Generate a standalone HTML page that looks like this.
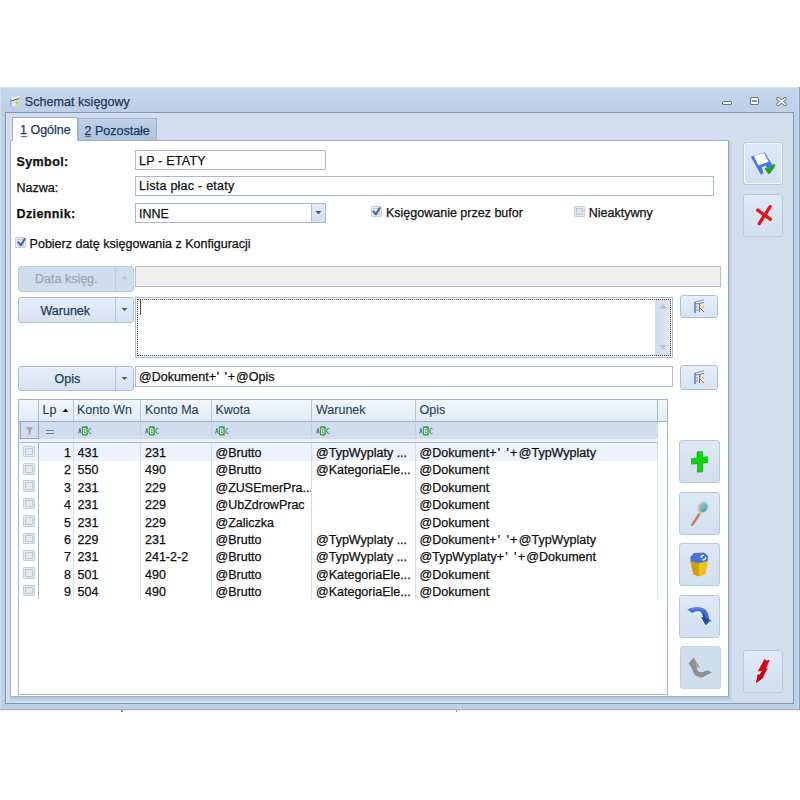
<!DOCTYPE html>
<html><head><meta charset="utf-8">
<style>
*{box-sizing:border-box;margin:0;padding:0}
html,body{width:800px;height:800px;background:#fff;overflow:hidden;position:relative;font-family:"Liberation Sans",sans-serif;font-size:12.5px;color:#101010}
.t{-webkit-text-stroke:0.25px currentColor}
.a{position:absolute}
.t{position:absolute;line-height:14px;white-space:nowrap;font-size:12.5px}
.b{font-weight:bold}
#win{left:0;top:87px;width:800px;height:623px;background:linear-gradient(#c6d7ec,#bccfe7 25px,#bed0e8 26px,#bdd0e8);border-bottom:1px solid #9fb0c4}
#win:before{content:"";position:absolute;left:0;top:0;width:1px;height:100%;background:#d0e0f2}
#win:after{content:"";position:absolute;left:0;top:0;width:100%;height:1px;background:#d3e2f3}
#frame{left:5px;top:112px;width:789px;height:592px;border:1px solid #8198b8;background:#d2deed}
#page{left:10px;top:140px;width:719px;height:557px;border:1px solid #9fb3cf;border-right-color:#8ea5c3;background:#fff}
.tab{position:absolute;border:1px solid #9fb3cf;border-bottom:none}
.inp{position:absolute;border:1px solid #a9b9d1;background:#fff}
.btn{position:absolute;border:1px solid #aebfd8;border-radius:3px;background:linear-gradient(#e6eef9,#d6e2f1)}
.cb{position:absolute;width:11px;height:11px;border:1px solid #bccfe6;border-radius:1px;box-shadow:inset 0 0 0 1px #e6ebf1,inset 0 0 0 2px #c3c7cd;background:#e7e8eb}
.gl{position:absolute;background:#d3dff0}
.abc{height:9px;font-size:6px;line-height:9px;font-family:"Liberation Sans",sans-serif;font-weight:bold;display:flex;gap:0}
.abc i{font-style:normal;color:#4c73b8;width:3.5px;text-align:center}
.abc b{background:#3cb043;color:#fff;width:6px;text-align:center;border-radius:1px}
.cb.g{width:11.5px;height:11.5px}
.btn.big{border-color:#b8c8dd;background:linear-gradient(#dfe9f6,#d2dfef)}
.btn.dflat{background:#cfdeed;border-color:#c3d3e6}
.btn.dis{background:#d0ddee;border-color:#bccce0}
.t.b{letter-spacing:0.4px}
.ap{letter-spacing:1.35px}
</style></head><body>
<div id="win" class="a"></div>
<div class="a" style="left:798px;top:87px;width:1px;height:622px;background:#d0e0f3"></div>
<div class="a" style="left:799px;top:87px;width:1px;height:623px;background:#8e9aa8"></div>
<!-- title icon -->
<svg class="a" style="left:0px;top:82px" width="20" height="28" viewBox="0 0 20 28">
<path d="M10 16.2 L19 13.2 L19 23.2 L10.6 25.6Z" fill="#8ca8e8"/>
<path d="M11.2 16 L19.2 13.6 L19.2 16 L11.4 18.6Z" fill="#ffffff"/>
<path d="M11.4 18.6 L19.2 16 L19.2 17 L11.4 19.6Z" fill="#606060"/>
<path d="M11.6 19.6 L19 17.2 L19 23 L11.6 25.2Z" fill="#dfe6ef"/>
<circle cx="17.2" cy="20.8" r="2.7" fill="#e5df88"/><circle cx="17.2" cy="20.8" r="1" fill="#a7b07a"/>
</svg>
<div class="t" style="left:24.8px;top:94.9px;color:#1e3a5c;font-size:12.6px">Schemat księgowy</div>
<!-- window buttons -->
<div class="a" style="left:722px;top:100.5px;width:10px;height:4.5px;border:1px solid #6a7684;border-radius:1px;background:#fff"></div>
<div class="a" style="left:750px;top:97px;width:9px;height:8px;border:1px solid #6a7684;border-radius:1px;background:#fff"></div>
<div class="a" style="left:752px;top:99.5px;width:5px;height:2px;background:#8a96a4"></div>
<svg class="a" style="left:776px;top:97px" width="11" height="9" viewBox="0 0 11 9"><path d="M2 1.6 L9 7.4 M9 1.6 L2 7.4" stroke="#6d7886" stroke-width="3.6" stroke-linecap="round"/><path d="M2 1.6 L9 7.4 M9 1.6 L2 7.4" stroke="#fff" stroke-width="1.7" stroke-linecap="round"/></svg>

<div class="a" style="left:0;top:710px;width:800px;height:1px;background:#e8edf4"></div>
<div class="a" style="left:121px;top:710px;width:2px;height:2px;background:#7d96b8"></div>
<div class="a" style="left:456px;top:710px;width:1px;height:2px;background:#7d96b8"></div>
<div id="frame" class="a"></div>
<div id="page" class="a"></div>
<div class="a" style="left:729px;top:141px;width:3px;height:557px;background:linear-gradient(90deg,#bccadb,#cfdcec)"></div>
<div class="a" style="left:10px;top:697px;width:722px;height:5px;background:linear-gradient(#b3c3d8,#d0ddec)"></div>
<!-- tabs -->
<div class="tab" style="left:77.5px;top:118px;width:79.5px;height:22px;background:linear-gradient(#bdd0e7,#afc4df)"></div>
<div class="tab" style="left:12px;top:117px;width:66px;height:24px;background:#fff"></div>
<div class="t" style="left:20px;top:122.5px;color:#1e395b">1 Ogólne</div>
<div class="a" style="left:20.5px;top:135.5px;width:6px;height:1px;background:#5a6f8c"></div>
<div class="t" style="left:84.5px;top:123.5px;color:#1e395b">2 Pozostałe</div>
<div class="a" style="left:85px;top:136px;width:6px;height:1px;background:#5a6f8c"></div>

<!-- labels -->
<div class="t b" style="left:16.5px;top:154.5px">Symbol:</div>
<div class="t" style="left:16.5px;top:180.5px">Nazwa:</div>
<div class="t b" style="left:16.5px;top:207.2px">Dziennik:</div>
<div class="inp" style="left:135px;top:150px;width:191px;height:20px"></div>
<div class="t" style="left:139px;top:153.5px;letter-spacing:0.22px">LP - ETATY</div>
<div class="inp" style="left:135px;top:176px;width:579px;height:20px"></div>
<div class="t" style="left:139px;top:179px;letter-spacing:0.25px">Lista płac - etaty</div>
<div class="inp" style="left:135px;top:203px;width:191px;height:20px"></div>
<div class="a" style="left:311px;top:203px;width:15px;height:20px;border:1px solid #a9b9d1;background:linear-gradient(#e2ebf7,#d3dff0)"></div>
<svg class="a" style="left:315px;top:210px" width="8" height="5"><path d="M0.5 1 L6.5 1 L3.5 4.5Z" fill="#4a5a78"/></svg>
<div class="t" style="left:139px;top:206.5px">INNE</div>

<div class="cb" style="left:370.9px;top:205.8px"></div>
<div class="t" style="left:386px;top:206px">Księgowanie przez bufor</div>
<div class="cb" style="left:574px;top:206px"></div>
<div class="t" style="left:588.8px;top:206px">Nieaktywny</div>
<div class="cb" style="left:15.4px;top:236.6px"></div>
<div class="t" style="left:29.6px;top:236.5px">Pobierz datę księgowania z Konfiguracji</div>

<!-- checkmarks -->
<svg class="a" style="left:372px;top:207px" width="10" height="10" viewBox="0 0 10 10"><path d="M1.4 4.4 L3.9 7.1 L7.6 1.2" stroke="#45659a" stroke-width="2" fill="none" stroke-linecap="round"/></svg>
<svg class="a" style="left:16.5px;top:238.2px" width="10" height="10" viewBox="0 0 10 10"><path d="M1.4 4.4 L3.9 7.1 L7.6 1.2" stroke="#45659a" stroke-width="2" fill="none" stroke-linecap="round"/></svg>

<!-- Data ksieg -->
<div class="btn dis" style="left:18px;top:266px;width:115.5px;height:25.5px"></div>
<div class="a" style="left:114.5px;top:267px;width:1px;height:23.5px;background:#bdcde1"></div>
<div class="t" style="left:35px;top:272px;color:#9ba6b6">Data księg.</div>
<svg class="a" style="left:120.5px;top:275.5px" width="8" height="5"><path d="M0.5 1 L6.5 1 L3.5 4Z" fill="#b6c2d2"/></svg>
<div class="inp" style="left:135px;top:266px;width:585.5px;height:20.5px;background:#efefef;border-color:#b3c1d6"></div>

<!-- Warunek -->
<div class="btn" style="left:18px;top:297px;width:115.5px;height:25.5px"></div>
<div class="a" style="left:114.5px;top:298px;width:1px;height:23.5px;background:#b4c5dc"></div>
<div class="t" style="left:40.5px;top:303.8px;color:#1e395b">Warunek</div>
<svg class="a" style="left:121px;top:307px" width="8" height="5"><path d="M0.5 1 L6.5 1 L3.5 4Z" fill="#4a5a78"/></svg>
<div class="inp" style="left:135px;top:297px;width:537.5px;height:61px"></div>
<div class="a" style="left:137px;top:299px;width:534px;height:57px;border:1px dotted #404040;z-index:2"></div>
<div class="a" style="left:655px;top:299px;width:16px;height:57px;background:linear-gradient(90deg,#d0dcec,#dde7f3)"></div>
<svg class="a" style="left:658px;top:303px" width="10" height="7"><path d="M1 6 L9 6 L5 1Z" fill="#b9c6d8"/></svg>
<svg class="a" style="left:658px;top:344px" width="10" height="7"><path d="M1 1 L9 1 L5 6Z" fill="#b9c6d8"/></svg>
<div class="a" style="left:140.3px;top:299.5px;width:1px;height:15px;background:#505050"></div>
<div class="btn" style="left:679.5px;top:294.5px;width:38px;height:23.5px"></div>

<!-- Opis -->
<div class="btn" style="left:18px;top:365.5px;width:115.5px;height:25.5px"></div>
<div class="a" style="left:114.5px;top:366.5px;width:1px;height:23.5px;background:#b4c5dc"></div>
<div class="t" style="left:54.5px;top:371.5px;color:#1e395b">Opis</div>
<svg class="a" style="left:121px;top:376px" width="8" height="5"><path d="M0.5 1 L6.5 1 L3.5 4Z" fill="#4a5a78"/></svg>
<div class="inp" style="left:135px;top:366px;width:537.5px;height:20.5px"></div>
<div class="t" style="left:139px;top:369.7px">@Dokument<span class="ap" style="letter-spacing:0.9px">+&#39; &#39;+</span>@Opis</div>
<div class="btn" style="left:679.5px;top:364.5px;width:38px;height:25.5px"></div>

<!-- grid -->
<div class="a" style="left:18px;top:399px;width:650px;height:296px;border:1px solid #a3b6cf;background:#fff"></div>
<div class="a" style="left:19px;top:400px;width:648px;height:22px;background:linear-gradient(#f2f6fb,#e2eaf5);border-bottom:1px solid #9fb2cc"></div>
<div class="a" style="left:19px;top:422px;width:638.5px;height:16.5px;background:#d1ddee"></div>
<div class="a" style="left:19px;top:438.5px;width:638.5px;height:3.5px;background:#eef3fa"></div>
<div class="a" style="left:19px;top:442px;width:638.5px;height:1px;background:#a9bad2"></div>
<div class="a" style="left:19px;top:443px;width:638.5px;height:17.6px;background:#edf2fc"></div>
<div class="a" style="left:20px;top:421px;width:18.7px;height:17.5px;border:1px solid #93a8c4"></div>

<div class="cb g" style="left:23.1px;top:445.70px"></div>
<div class="t" style="left:38px;width:33px;text-align:right;top:446.00px">1</div>
<div class="t" style="left:77.5px;top:446.00px;width:62px;overflow:hidden">431</div>
<div class="t" style="left:145px;top:446.00px;width:66px;overflow:hidden">231</div>
<div class="t" style="left:215.5px;top:446.00px;width:95px;overflow:hidden">@Brutto</div>
<div class="t" style="left:316px;top:446.00px;width:99px;overflow:hidden">@TypWyplaty ...</div>
<div class="t" style="left:419.5px;top:446.00px;width:237px;overflow:hidden">@Dokument<span class="ap">+&#39; &#39;+</span>@TypWyplaty</div>
<div class="cb g" style="left:23.1px;top:463.07px"></div>
<div class="t" style="left:38px;width:33px;text-align:right;top:463.38px">2</div>
<div class="t" style="left:77.5px;top:463.38px;width:62px;overflow:hidden">550</div>
<div class="t" style="left:145px;top:463.38px;width:66px;overflow:hidden">490</div>
<div class="t" style="left:215.5px;top:463.38px;width:95px;overflow:hidden">@Brutto</div>
<div class="t" style="left:316px;top:463.38px;width:99px;overflow:hidden">@KategoriaEle...</div>
<div class="t" style="left:419.5px;top:463.38px;width:237px;overflow:hidden">@Dokument</div>
<div class="cb g" style="left:23.1px;top:480.45px"></div>
<div class="t" style="left:38px;width:33px;text-align:right;top:480.75px">3</div>
<div class="t" style="left:77.5px;top:480.75px;width:62px;overflow:hidden">231</div>
<div class="t" style="left:145px;top:480.75px;width:66px;overflow:hidden">229</div>
<div class="t" style="left:215.5px;top:480.75px;width:95px;overflow:hidden">@ZUSEmerPra...</div>
<div class="t" style="left:419.5px;top:480.75px;width:237px;overflow:hidden">@Dokument</div>
<div class="cb g" style="left:23.1px;top:497.82px"></div>
<div class="t" style="left:38px;width:33px;text-align:right;top:498.13px">4</div>
<div class="t" style="left:77.5px;top:498.13px;width:62px;overflow:hidden">231</div>
<div class="t" style="left:145px;top:498.13px;width:66px;overflow:hidden">229</div>
<div class="t" style="left:215.5px;top:498.13px;width:95px;overflow:hidden">@UbZdrowPrac</div>
<div class="t" style="left:419.5px;top:498.13px;width:237px;overflow:hidden">@Dokument</div>
<div class="cb g" style="left:23.1px;top:515.20px"></div>
<div class="t" style="left:38px;width:33px;text-align:right;top:515.50px">5</div>
<div class="t" style="left:77.5px;top:515.50px;width:62px;overflow:hidden">231</div>
<div class="t" style="left:145px;top:515.50px;width:66px;overflow:hidden">229</div>
<div class="t" style="left:215.5px;top:515.50px;width:95px;overflow:hidden">@Zaliczka</div>
<div class="t" style="left:419.5px;top:515.50px;width:237px;overflow:hidden">@Dokument</div>
<div class="cb g" style="left:23.1px;top:532.58px"></div>
<div class="t" style="left:38px;width:33px;text-align:right;top:532.88px">6</div>
<div class="t" style="left:77.5px;top:532.88px;width:62px;overflow:hidden">229</div>
<div class="t" style="left:145px;top:532.88px;width:66px;overflow:hidden">231</div>
<div class="t" style="left:215.5px;top:532.88px;width:95px;overflow:hidden">@Brutto</div>
<div class="t" style="left:316px;top:532.88px;width:99px;overflow:hidden">@TypWyplaty ...</div>
<div class="t" style="left:419.5px;top:532.88px;width:237px;overflow:hidden">@Dokument<span class="ap">+&#39; &#39;+</span>@TypWyplaty</div>
<div class="cb g" style="left:23.1px;top:549.95px"></div>
<div class="t" style="left:38px;width:33px;text-align:right;top:550.25px">7</div>
<div class="t" style="left:77.5px;top:550.25px;width:62px;overflow:hidden">231</div>
<div class="t" style="left:145px;top:550.25px;width:66px;overflow:hidden">241-2-2</div>
<div class="t" style="left:215.5px;top:550.25px;width:95px;overflow:hidden">@Brutto</div>
<div class="t" style="left:316px;top:550.25px;width:99px;overflow:hidden">@TypWyplaty ...</div>
<div class="t" style="left:419.5px;top:550.25px;width:237px;overflow:hidden">@TypWyplaty<span class="ap">+&#39; &#39;+</span>@Dokument</div>
<div class="cb g" style="left:23.1px;top:567.33px"></div>
<div class="t" style="left:38px;width:33px;text-align:right;top:567.63px">8</div>
<div class="t" style="left:77.5px;top:567.63px;width:62px;overflow:hidden">501</div>
<div class="t" style="left:145px;top:567.63px;width:66px;overflow:hidden">490</div>
<div class="t" style="left:215.5px;top:567.63px;width:95px;overflow:hidden">@Brutto</div>
<div class="t" style="left:316px;top:567.63px;width:99px;overflow:hidden">@KategoriaEle...</div>
<div class="t" style="left:419.5px;top:567.63px;width:237px;overflow:hidden">@Dokument</div>
<div class="cb g" style="left:23.1px;top:584.70px"></div>
<div class="t" style="left:38px;width:33px;text-align:right;top:585.00px">9</div>
<div class="t" style="left:77.5px;top:585.00px;width:62px;overflow:hidden">504</div>
<div class="t" style="left:145px;top:585.00px;width:66px;overflow:hidden">490</div>
<div class="t" style="left:215.5px;top:585.00px;width:95px;overflow:hidden">@Brutto</div>
<div class="t" style="left:316px;top:585.00px;width:99px;overflow:hidden">@KategoriaEle...</div>
<div class="t" style="left:419.5px;top:585.00px;width:237px;overflow:hidden">@Dokument</div>
<!-- grid col lines header -->
<div class="a" style="left:38px;top:400px;width:1px;height:21px;background:#a9bbd3"></div>
<div class="a" style="left:73px;top:400px;width:1px;height:21px;background:#b6c6dc"></div>
<div class="a" style="left:140px;top:400px;width:1px;height:21px;background:#b6c6dc"></div>
<div class="a" style="left:211px;top:400px;width:1px;height:21px;background:#b6c6dc"></div>
<div class="a" style="left:311px;top:400px;width:1px;height:21px;background:#b6c6dc"></div>
<div class="a" style="left:415px;top:400px;width:1px;height:21px;background:#b6c6dc"></div>
<div class="a" style="left:657px;top:400px;width:1px;height:21px;background:#a3b5ce"></div>
<!-- filter row col lines -->
<div class="a" style="left:73px;top:422px;width:1px;height:16.5px;background:#c3d2e6"></div>
<div class="a" style="left:140px;top:422px;width:1px;height:16.5px;background:#c3d2e6"></div>
<div class="a" style="left:211px;top:422px;width:1px;height:16.5px;background:#c3d2e6"></div>
<div class="a" style="left:311px;top:422px;width:1px;height:16.5px;background:#c3d2e6"></div>
<div class="a" style="left:415px;top:422px;width:1px;height:16.5px;background:#c3d2e6"></div>
<!-- data col lines -->
<div class="a" style="left:38px;top:443px;width:1px;height:156px;background:#a3b6cf"></div>
<div class="gl" style="left:73px;top:443px;width:1px;height:156px"></div>
<div class="gl" style="left:140px;top:443px;width:1px;height:156px"></div>
<div class="gl" style="left:211px;top:443px;width:1px;height:156px"></div>
<div class="gl" style="left:311px;top:443px;width:1px;height:156px"></div>
<div class="gl" style="left:415px;top:443px;width:1px;height:156px"></div>
<div class="gl" style="left:657px;top:443px;width:1px;height:156px"></div>
<!-- header text -->
<div class="t" style="left:42.5px;top:403.2px;color:#243d5e;-webkit-text-stroke:0.1px #243d5e">Lp</div>
<svg class="a" style="left:62px;top:408px" width="8" height="5"><path d="M0.5 4 L6.5 4 L3.5 0.5Z" fill="#1b1b1b"/></svg>
<div class="t" style="left:77px;top:403.2px;color:#243d5e;-webkit-text-stroke:0.1px #243d5e">Konto Wn</div>
<div class="t" style="left:145px;top:403.2px;color:#243d5e;-webkit-text-stroke:0.1px #243d5e">Konto Ma</div>
<div class="t" style="left:215.5px;top:403.2px;color:#243d5e;-webkit-text-stroke:0.1px #243d5e">Kwota</div>
<div class="t" style="left:316px;top:403.2px;color:#243d5e;-webkit-text-stroke:0.1px #243d5e">Warunek</div>
<div class="t" style="left:419.5px;top:403.2px;color:#243d5e;-webkit-text-stroke:0.1px #243d5e">Opis</div>
<!-- filter icons -->
<div class="a" style="left:46px;top:430px;width:8px;height:1px;background:#5f80bd"></div>
<div class="a" style="left:46px;top:433px;width:8px;height:1px;background:#5f80bd"></div>
<svg class="a" style="left:25px;top:426px" width="9" height="10" viewBox="0 0 9 10"><path d="M1 1.5 Q4.5 0.6 8 1.5 L5.4 5 L6.8 6.4 L5 6.2 L4.6 9 L3.6 9 L3.8 5 Z" fill="#a6a49e"/></svg>
<svg class="a" style="left:77.7px;top:426px" width="15" height="10" viewBox="0 0 15 10"><path d="M0.6 7.6 L1.9 2.4 L3.2 7.6 M1.1 5.8 L2.7 5.8" stroke="#4d6fb2" stroke-width="1" fill="none"/><rect x="3.9" y="0.3" width="5.9" height="9.3" rx="1" fill="#35a83c"/><path d="M5.5 2.3 L5.5 7.7 M5.5 2.5 L7 2.5 Q8.1 2.5 8.1 3.7 Q8.1 4.9 7 4.9 L5.5 4.9 M7 4.9 Q8.3 4.9 8.3 6.3 Q8.3 7.5 7 7.5 L5.5 7.5" stroke="#eef8ee" stroke-width="0.9" fill="none"/><path d="M13.6 3 Q13 2.4 12.2 2.4 Q10.8 2.5 10.8 5 Q10.8 7.6 12.2 7.6 Q13 7.6 13.6 7" stroke="#4d6fb2" stroke-width="1" fill="none"/></svg>
<svg class="a" style="left:145.2px;top:426px" width="15" height="10" viewBox="0 0 15 10"><path d="M0.6 7.6 L1.9 2.4 L3.2 7.6 M1.1 5.8 L2.7 5.8" stroke="#4d6fb2" stroke-width="1" fill="none"/><rect x="3.9" y="0.3" width="5.9" height="9.3" rx="1" fill="#35a83c"/><path d="M5.5 2.3 L5.5 7.7 M5.5 2.5 L7 2.5 Q8.1 2.5 8.1 3.7 Q8.1 4.9 7 4.9 L5.5 4.9 M7 4.9 Q8.3 4.9 8.3 6.3 Q8.3 7.5 7 7.5 L5.5 7.5" stroke="#eef8ee" stroke-width="0.9" fill="none"/><path d="M13.6 3 Q13 2.4 12.2 2.4 Q10.8 2.5 10.8 5 Q10.8 7.6 12.2 7.6 Q13 7.6 13.6 7" stroke="#4d6fb2" stroke-width="1" fill="none"/></svg>
<svg class="a" style="left:215.2px;top:426px" width="15" height="10" viewBox="0 0 15 10"><path d="M0.6 7.6 L1.9 2.4 L3.2 7.6 M1.1 5.8 L2.7 5.8" stroke="#4d6fb2" stroke-width="1" fill="none"/><rect x="3.9" y="0.3" width="5.9" height="9.3" rx="1" fill="#35a83c"/><path d="M5.5 2.3 L5.5 7.7 M5.5 2.5 L7 2.5 Q8.1 2.5 8.1 3.7 Q8.1 4.9 7 4.9 L5.5 4.9 M7 4.9 Q8.3 4.9 8.3 6.3 Q8.3 7.5 7 7.5 L5.5 7.5" stroke="#eef8ee" stroke-width="0.9" fill="none"/><path d="M13.6 3 Q13 2.4 12.2 2.4 Q10.8 2.5 10.8 5 Q10.8 7.6 12.2 7.6 Q13 7.6 13.6 7" stroke="#4d6fb2" stroke-width="1" fill="none"/></svg>
<svg class="a" style="left:315.7px;top:426px" width="15" height="10" viewBox="0 0 15 10"><path d="M0.6 7.6 L1.9 2.4 L3.2 7.6 M1.1 5.8 L2.7 5.8" stroke="#4d6fb2" stroke-width="1" fill="none"/><rect x="3.9" y="0.3" width="5.9" height="9.3" rx="1" fill="#35a83c"/><path d="M5.5 2.3 L5.5 7.7 M5.5 2.5 L7 2.5 Q8.1 2.5 8.1 3.7 Q8.1 4.9 7 4.9 L5.5 4.9 M7 4.9 Q8.3 4.9 8.3 6.3 Q8.3 7.5 7 7.5 L5.5 7.5" stroke="#eef8ee" stroke-width="0.9" fill="none"/><path d="M13.6 3 Q13 2.4 12.2 2.4 Q10.8 2.5 10.8 5 Q10.8 7.6 12.2 7.6 Q13 7.6 13.6 7" stroke="#4d6fb2" stroke-width="1" fill="none"/></svg>
<svg class="a" style="left:419.2px;top:426px" width="15" height="10" viewBox="0 0 15 10"><path d="M0.6 7.6 L1.9 2.4 L3.2 7.6 M1.1 5.8 L2.7 5.8" stroke="#4d6fb2" stroke-width="1" fill="none"/><rect x="3.9" y="0.3" width="5.9" height="9.3" rx="1" fill="#35a83c"/><path d="M5.5 2.3 L5.5 7.7 M5.5 2.5 L7 2.5 Q8.1 2.5 8.1 3.7 Q8.1 4.9 7 4.9 L5.5 4.9 M7 4.9 Q8.3 4.9 8.3 6.3 Q8.3 7.5 7 7.5 L5.5 7.5" stroke="#eef8ee" stroke-width="0.9" fill="none"/><path d="M13.6 3 Q13 2.4 12.2 2.4 Q10.8 2.5 10.8 5 Q10.8 7.6 12.2 7.6 Q13 7.6 13.6 7" stroke="#4d6fb2" stroke-width="1" fill="none"/></svg>
<!-- right toolbar -->
<div class="btn big" style="left:742.5px;top:142.3px;width:40.6px;height:42.6px;box-shadow:inset 0 0 0 1px #f7fafd"></div>
<svg class="a" style="left:740px;top:140px" width="46" height="46" viewBox="0 0 46 46">
<path d="M10.9 16.7 L24.7 12.4 L34.5 28.2 L20.7 34.5Z" fill="#4a78da"/>
<path d="M13.8 15.9 L23.9 12.9 L28.7 21.8 L18.4 25.3Z" fill="#fff"/>
<path d="M21.8 27 L26 25.8 L28 31.6 L23.6 33.2Z" fill="#e4e9f0"/>
<path d="M26.2 28.9 L29 32.6 L33.9 25.4" stroke="#1aa81a" stroke-width="2.8" fill="none" stroke-linecap="round" stroke-linejoin="round"/>
</svg>
<div class="btn big" style="left:742.5px;top:194.3px;width:40.6px;height:43px"></div>
<svg class="a" style="left:742.5px;top:194.3px" width="41" height="43" viewBox="0 0 41 43">
<path d="M14.7 16.1 L27.4 25.3 M27.1 12.7 L16.2 29.6" stroke="#e8121c" stroke-width="3.3" stroke-linecap="round"/>
</svg>
<div class="btn big" style="left:742.5px;top:650.3px;width:40.6px;height:43px"></div>
<svg class="a" style="left:740px;top:648px" width="46" height="46" viewBox="0 0 46 46">
<path d="M24.4 11.2 L26.8 12.4 L29.9 12.1 L26 19.9 L27.5 20.6 L23.1 28.9 L23.7 29.3 L16.1 35.1 L17.9 26.3 L19.4 27.1 L22.4 23.1 L17.8 23.2Z" fill="#e20010"/>
<path d="M17.9 26.3 L19.4 27.1 L22.4 23.1 L23.1 28.9 L23.7 29.3 L16.1 35.1Z" fill="#c0000c"/>
</svg>
<!-- grid side buttons -->
<div class="btn big" style="left:679.3px;top:440.3px;width:40.6px;height:42.8px"></div>
<svg class="a" style="left:677px;top:438px" width="41" height="43" viewBox="0 0 41 43">
<path d="M19.8 13.8 L25.8 13.2 L25.8 19 L31 18.6 L31 24.8 L25.8 25.4 L25.8 34.2 L20.2 34.6 L20.2 26 L14.2 26.6 L14.2 20.4 L19.8 19.8Z" fill="#0a9a0a"/>
<path d="M20.6 13.4 L25.8 13 L25.8 19 L31 18.4 L31 24.2 L25.8 24.8 L25.8 33.6 L21 34 L21 25.4 L15 26 L15 20.2 L20.6 19.6Z" fill="#0fd60f"/>
</svg>
<div class="btn big" style="left:679.3px;top:492.3px;width:40.6px;height:42.8px"></div>
<svg class="a" style="left:677px;top:490px" width="46" height="46" viewBox="0 0 46 46">
<defs><linearGradient id="lg1" x1="0" y1="0" x2="1" y2="1"><stop offset="0" stop-color="#9ad6ea"/><stop offset="1" stop-color="#3d93bd"/></linearGradient></defs>
<path d="M22.2 24.4 L15.4 34.6" stroke="#b47a55" stroke-width="2.5" stroke-linecap="round"/>
<path d="M22.2 24.4 L15.4 34.6" stroke="#d9a47c" stroke-width="0.8" stroke-dasharray="1 1"/>
<ellipse cx="25.8" cy="17.4" rx="5.1" ry="6.2" transform="rotate(22 25.8 17.4)" fill="#dccb7a"/>
<ellipse cx="26.5" cy="17.1" rx="3.9" ry="5.1" transform="rotate(22 26.5 17.1)" fill="url(#lg1)"/>
</svg>
<div class="btn big" style="left:679.3px;top:543.3px;width:40.6px;height:42.8px"></div>
<svg class="a" style="left:677px;top:541px" width="41" height="43" viewBox="0 0 41 43">
<path d="M13.5 20.5 L31 20.5 L28.5 33.2 L21.8 35.6 L16.2 33.2Z" fill="#f2c20c"/>
<path d="M13.5 20.5 L21.8 22.5 L21.8 35.6 L16.2 33.2Z" fill="#c9a010"/>
<path d="M13.4 16 L17 12 L27 11.4 L31 15 L30.8 20 L22 22.2 L13.4 20.4Z" fill="#4a74d6"/>
<circle cx="26.4" cy="16.6" r="2.2" stroke="#fff" stroke-width="1.2" fill="none" stroke-dasharray="4 2"/>
</svg>
<div class="btn big" style="left:679.3px;top:595.3px;width:40.6px;height:42.8px"></div>
<svg class="a" style="left:677px;top:593px" width="46" height="46" viewBox="0 0 46 46">
<path d="M10.35 16.4 Q17 13.6 23 14.6 Q30.5 16 31.6 23 L32.2 26.2 L34.5 27.6 L28.75 31.9 L24.15 24.15 L26.2 24.7 Q25.8 20.5 22.4 18.1 Q18.5 17.6 15.2 20.1 Z" fill="#3f6cd4"/>
<path d="M24.6 18.6 Q27.6 20.4 28.6 24.6 L32.2 26.2 L28.75 31.9 L24.15 24.15 L26.2 24.7 Q25.8 20.5 24.6 18.6Z" fill="#2448a0"/>
<path d="M10.35 16.4 Q17 13.6 23 14.6 Q27 15.4 29.4 17.6 Q24 15.8 18 16.2 Q13 16.8 10.35 16.4Z" fill="#5a86e8"/>
</svg>
<div class="btn big dflat" style="left:679.9px;top:646.3px;width:40.8px;height:43.1px"></div>
<svg class="a" style="left:677px;top:644px" width="41" height="43" viewBox="0 0 41 43">
<path d="M16.7 13.4 L22.9 23.4 L19.6 23.2 Q20 28.5 25 28.2 L31 26.2 L35 28.6 L25 33.4 Q16.2 33.2 15 24.4 L11.6 19.6Z" fill="#8f8f8f"/>
<path d="M16.7 13.4 L22.9 23.4 L19.6 23.2 Z" fill="#a8a8a8"/>
</svg>
<!-- small buttons with icon -->
<svg class="a" style="left:694px;top:299px" width="12" height="15" viewBox="0 0 12 15"><path d="M1 3 L10 0.5 L10 13 L1 14Z" fill="#e7ebf0"/><path d="M1 3 L1 14" stroke="#3f5fd8" stroke-width="1.3"/><path d="M1 3 L10 0.8" stroke="#5a78d8" stroke-width="0.8"/><path d="M2 5 L10 3.5" stroke="#7a7a7a" stroke-width="1.2"/><circle cx="6" cy="6" r="1" fill="#f2a93a"/><circle cx="9" cy="8" r="1" fill="#f2a93a"/><path d="M5.5 5 L5.5 13 M6 9 L10 13" stroke="#707070" stroke-width="1"/><circle cx="3" cy="8" r="0.8" fill="#4b8ad0"/><circle cx="3" cy="11" r="0.8" fill="#4b8ad0"/></svg>
<svg class="a" style="left:694px;top:370px" width="12" height="15" viewBox="0 0 12 15"><path d="M1 3 L10 0.5 L10 13 L1 14Z" fill="#e7ebf0"/><path d="M1 3 L1 14" stroke="#3f5fd8" stroke-width="1.3"/><path d="M1 3 L10 0.8" stroke="#5a78d8" stroke-width="0.8"/><path d="M2 5 L10 3.5" stroke="#7a7a7a" stroke-width="1.2"/><circle cx="6" cy="6" r="1" fill="#f2a93a"/><circle cx="9" cy="8" r="1" fill="#f2a93a"/><path d="M5.5 5 L5.5 13 M6 9 L10 13" stroke="#707070" stroke-width="1"/><circle cx="3" cy="8" r="0.8" fill="#4b8ad0"/><circle cx="3" cy="11" r="0.8" fill="#4b8ad0"/></svg>

</body></html>
